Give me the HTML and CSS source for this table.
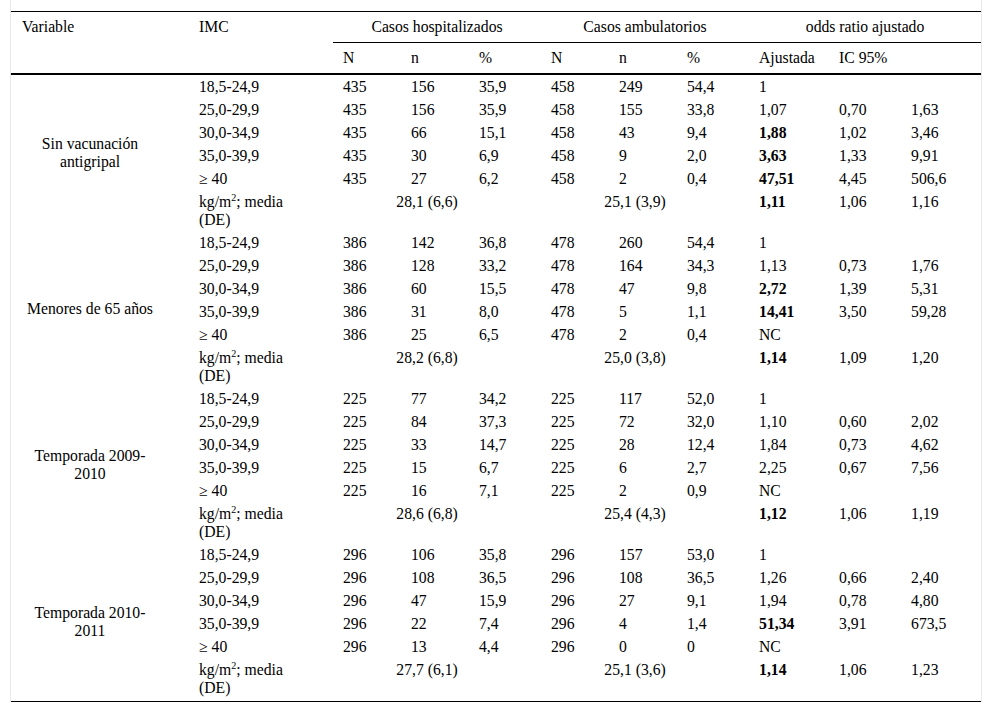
FILE: index.html
```html
<!DOCTYPE html>
<html lang="es">
<head>
<meta charset="utf-8">
<title>Tabla IMC</title>
<link rel="stylesheet" href="styles.css">
</head>
<body>
<div class="frame">
<table class="data">
  <colgroup>
    <col class="c-var"><col class="c-imc">
    <col class="c-a"><col class="c-a"><col class="c-b">
    <col class="c-a"><col class="c-a"><col class="c-b">
    <col class="c-c"><col class="c-b"><col class="c-c">
  </colgroup>
  <thead>
    <tr class="h1">
      <th rowspan="2" class="first">Variable</th>
      <th rowspan="2">IMC</th>
      <th colspan="3" class="grp">Casos hospitalizados</th>
      <th colspan="3" class="grp">Casos ambulatorios</th>
      <th colspan="3" class="grp">odds ratio ajustado</th>
    </tr>
    <tr class="h2">
      <th>N</th><th>n</th><th>%</th>
      <th>N</th><th>n</th><th>%</th>
      <th>Ajustada</th><th>IC 95%</th><th></th>
    </tr>
  </thead>
  <tbody>
    <tr><td rowspan="6" class="label">Sin vacunación antigripal</td><td>18,5-24,9</td><td>435</td><td>156</td><td>35,9</td><td>458</td><td>249</td><td>54,4</td><td>1</td><td></td><td></td></tr>
    <tr><td>25,0-29,9</td><td>435</td><td>156</td><td>35,9</td><td>458</td><td>155</td><td>33,8</td><td>1,07</td><td>0,70</td><td>1,63</td></tr>
    <tr><td>30,0-34,9</td><td>435</td><td>66</td><td>15,1</td><td>458</td><td>43</td><td>9,4</td><td><b>1,88</b></td><td>1,02</td><td>3,46</td></tr>
    <tr><td>35,0-39,9</td><td>435</td><td>30</td><td>6,9</td><td>458</td><td>9</td><td>2,0</td><td><b>3,63</b></td><td>1,33</td><td>9,91</td></tr>
    <tr><td>≥ 40</td><td>435</td><td>27</td><td>6,2</td><td>458</td><td>2</td><td>0,4</td><td><b>47,51</b></td><td>4,45</td><td>506,6</td></tr>
    <tr class="kg"><td>kg/m<sup>2</sup>; media (DE)</td><td colspan="3" class="mid">28,1 (6,6)</td><td colspan="3" class="mid">25,1 (3,9)</td><td><b>1,11</b></td><td>1,06</td><td>1,16</td></tr>

    <tr><td rowspan="6" class="label">Menores de 65 años</td><td>18,5-24,9</td><td>386</td><td>142</td><td>36,8</td><td>478</td><td>260</td><td>54,4</td><td>1</td><td></td><td></td></tr>
    <tr><td>25,0-29,9</td><td>386</td><td>128</td><td>33,2</td><td>478</td><td>164</td><td>34,3</td><td>1,13</td><td>0,73</td><td>1,76</td></tr>
    <tr><td>30,0-34,9</td><td>386</td><td>60</td><td>15,5</td><td>478</td><td>47</td><td>9,8</td><td><b>2,72</b></td><td>1,39</td><td>5,31</td></tr>
    <tr><td>35,0-39,9</td><td>386</td><td>31</td><td>8,0</td><td>478</td><td>5</td><td>1,1</td><td><b>14,41</b></td><td>3,50</td><td>59,28</td></tr>
    <tr><td>≥ 40</td><td>386</td><td>25</td><td>6,5</td><td>478</td><td>2</td><td>0,4</td><td>NC</td><td></td><td></td></tr>
    <tr class="kg"><td>kg/m<sup>2</sup>; media (DE)</td><td colspan="3" class="mid">28,2 (6,8)</td><td colspan="3" class="mid">25,0 (3,8)</td><td><b>1,14</b></td><td>1,09</td><td>1,20</td></tr>

    <tr><td rowspan="6" class="label">Temporada 2009-2010</td><td>18,5-24,9</td><td>225</td><td>77</td><td>34,2</td><td>225</td><td>117</td><td>52,0</td><td>1</td><td></td><td></td></tr>
    <tr><td>25,0-29,9</td><td>225</td><td>84</td><td>37,3</td><td>225</td><td>72</td><td>32,0</td><td>1,10</td><td>0,60</td><td>2,02</td></tr>
    <tr><td>30,0-34,9</td><td>225</td><td>33</td><td>14,7</td><td>225</td><td>28</td><td>12,4</td><td>1,84</td><td>0,73</td><td>4,62</td></tr>
    <tr><td>35,0-39,9</td><td>225</td><td>15</td><td>6,7</td><td>225</td><td>6</td><td>2,7</td><td>2,25</td><td>0,67</td><td>7,56</td></tr>
    <tr><td>≥ 40</td><td>225</td><td>16</td><td>7,1</td><td>225</td><td>2</td><td>0,9</td><td>NC</td><td></td><td></td></tr>
    <tr class="kg"><td>kg/m<sup>2</sup>; media (DE)</td><td colspan="3" class="mid">28,6 (6,8)</td><td colspan="3" class="mid">25,4 (4,3)</td><td><b>1,12</b></td><td>1,06</td><td>1,19</td></tr>

    <tr><td rowspan="6" class="label">Temporada 2010-2011</td><td>18,5-24,9</td><td>296</td><td>106</td><td>35,8</td><td>296</td><td>157</td><td>53,0</td><td>1</td><td></td><td></td></tr>
    <tr><td>25,0-29,9</td><td>296</td><td>108</td><td>36,5</td><td>296</td><td>108</td><td>36,5</td><td>1,26</td><td>0,66</td><td>2,40</td></tr>
    <tr><td>30,0-34,9</td><td>296</td><td>47</td><td>15,9</td><td>296</td><td>27</td><td>9,1</td><td>1,94</td><td>0,78</td><td>4,80</td></tr>
    <tr><td>35,0-39,9</td><td>296</td><td>22</td><td>7,4</td><td>296</td><td>4</td><td>1,4</td><td><b>51,34</b></td><td>3,91</td><td>673,5</td></tr>
    <tr><td>≥ 40</td><td>296</td><td>13</td><td>4,4</td><td>296</td><td>0</td><td>0</td><td>NC</td><td></td><td></td></tr>
    <tr class="kg last"><td>kg/m<sup>2</sup>; media (DE)</td><td colspan="3" class="mid">27,7 (6,1)</td><td colspan="3" class="mid">25,1 (3,6)</td><td><b>1,14</b></td><td>1,06</td><td>1,23</td></tr>
  </tbody>
</table>
</div>
</body>
</html>
```

FILE: styles.css
```css
html, body {
  margin: 0;
  padding: 0;
  background: #fff;
}
body {
  font-family: "Liberation Serif", "Times New Roman", serif;
  font-size: 15.7px;
  color: #000;
}
.frame {
  margin-left: 10px;
  width: 970px;
  padding-top: 11px;
  border-left: 1px solid #e8e8e8;
  border-right: 1px solid #e8e8e8;
}
.data {
  width: 970px;
  table-layout: fixed;
  border-collapse: collapse;
  border-top: 1px solid #000;
  border-bottom: 1px solid #000;
}
.c-var { width: 178px; }
.c-imc { width: 144px; }
.c-a { width: 68px; }
.c-b { width: 72px; }
.c-c { width: 80px; }

th {
  font-weight: normal;
  text-align: left;
  vertical-align: top;
  padding: 6px 0 6px 10px;
  line-height: 18px;
  white-space: nowrap;
}
th.first { padding-left: 11px; }
th.grp {
  text-align: center;
  padding-left: 0;
  border-bottom: 1px solid #000;
}
.h1 th[rowspan], .h2 th {
  border-bottom: 2px solid #000;
}

td {
  vertical-align: top;
  text-align: left;
  padding: 3px 30px 2px 10px;
  line-height: 18px;
}
td.label {
  vertical-align: middle;
  text-align: center;
  padding: 0 32px 0 12px;
}
td.mid { text-align: center; }
.last td { padding-bottom: 4px; }
b { font-weight: bold; }
sup {
  font-size: 10px;
  line-height: 0;
  vertical-align: 6px;
}
```
